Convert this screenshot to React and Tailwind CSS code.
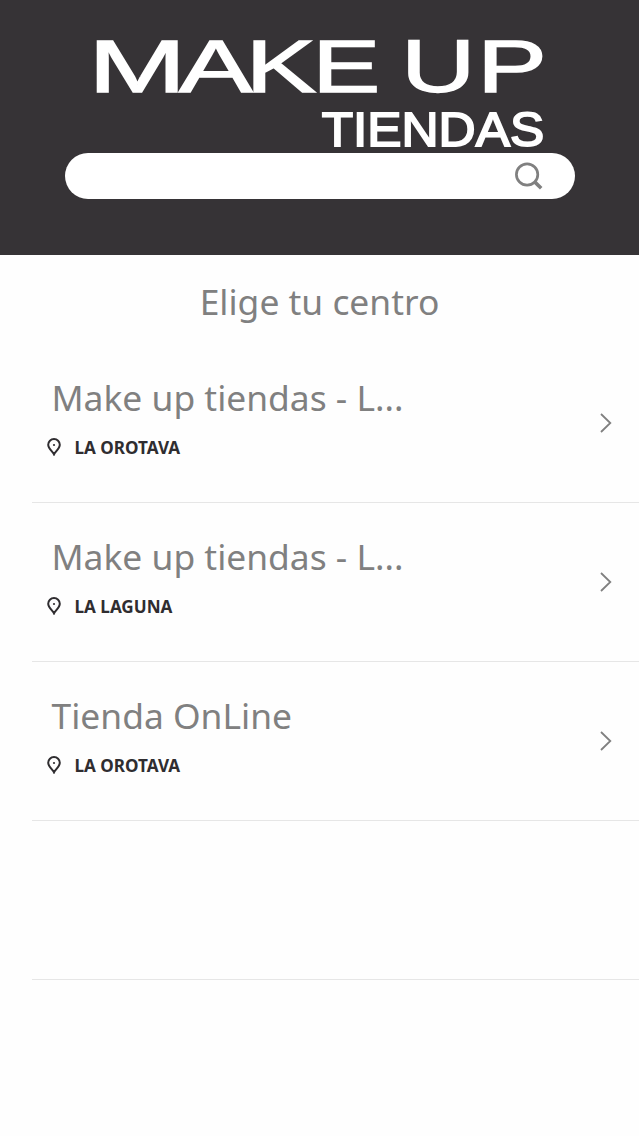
const letters = [
  { char: 'M', transform: 'translate(88.2 91.5) scale(1.6 1)' },
  { char: 'A', transform: 'translate(179 91.5) scale(1.5 1)' },
  { char: 'K', transform: 'translate(245.8 91.5) scale(1.435 1)' },
  { char: 'E', transform: 'translate(312.5 91.5) scale(1.382 1)' },
  { char: 'U', transform: 'translate(401.3 91.5) scale(1.395 1)' },
  { char: 'P', transform: 'translate(477.2 91.5) scale(1.42 1)' },
];

const stores = [
  { name: 'Make up tiendas - L...', city: 'LA OROTAVA' },
  { name: 'Make up tiendas - L...', city: 'LA LAGUNA' },
  { name: 'Tienda OnLine', city: 'LA OROTAVA' },
];

function Logo() {
  return (
    <svg
      width="639"
      height="153"
      viewBox="0 0 639 153"
      className="block shrink-0 overflow-visible font-['Liberation_Sans',sans-serif]"
      fill="#fff"
      stroke="#fff"
      aria-label="Make Up Tiendas"
    >
      {letters.map((letter) => (
        <text key={letter.char} transform={letter.transform} fontSize="73.5" strokeWidth="1.4">
          {letter.char}
        </text>
      ))}
      <text x="321.7" y="145.7" fontSize="47.5" strokeWidth="1.8" textLength="222.5" lengthAdjust="spacingAndGlyphs">
        TIENDAS
      </text>
    </svg>
  );
}

function SearchIcon() {
  return (
    <svg width="28" height="28" viewBox="0 0 28 28" fill="none" stroke="#808080">
      <circle cx="12.1" cy="12.5" r="10.7" strokeWidth="2.7" />
      <path d="M19.4 19.6l6.8 6.7" strokeWidth="3.6" />
    </svg>
  );
}

function PinIcon() {
  return (
    <svg width="14" height="18" viewBox="0 0 14 18" fill="none" stroke="#2f2d30" strokeWidth="2">
      <path d="M7 16.4C5.7 13.6 1.2 10.6 1.2 6.8a5.8 5.8 0 0 1 11.6 0C12.8 10.6 8.3 13.6 7 16.4z" />
      <circle cx="7" cy="7" r="1.1" fill="#2f2d30" stroke="none" />
    </svg>
  );
}

function ChevronIcon() {
  return (
    <svg width="12" height="20" viewBox="0 0 12 20" fill="none" stroke="#808080" strokeWidth="1.8">
      <path d="M1 1l9.3 9L1 19" />
    </svg>
  );
}

function StoreRow({ store }) {
  return (
    <li className="ml-8 h-[159px] border-b border-[#e6e6e6] flex items-start justify-between">
      <div className="pt-7">
        <h2 className="ml-[19.5px] h-[50px] text-[35.4px] leading-[50px] text-[#808080] whitespace-nowrap">{store.name}</h2>
        <p className="ml-[15px] mt-[13px] h-6 flex items-center gap-[13.5px] text-[17.1px] leading-6 font-bold text-[#2f2d30]">
          <PinIcon />
          <span className="pt-0.5">{store.city}</span>
        </p>
      </div>
      <span className="mt-[69px] mr-[27px]">
        <ChevronIcon />
      </span>
    </li>
  );
}

export default function App() {
  return (
    <div className="w-full min-h-[1136px] bg-[#fefefe] font-['Noto_Sans',sans-serif]">
      <header className="h-[254.5px] bg-[#363336] flex flex-col items-center">
        <Logo />
        <div className="w-[510px] h-[46px] rounded-full bg-white flex items-center justify-end pr-8">
          <SearchIcon />
        </div>
      </header>
      <h1 className="pt-[21.5px] h-[89.5px] text-center text-[35.4px] leading-[50px] text-[#808080]">Elige tu centro</h1>
      <ul>
        {stores.map((store, i) => (
          <StoreRow key={i} store={store} />
        ))}
        <li className="ml-8 h-[159px] border-b border-[#e6e6e6]" />
      </ul>
    </div>
  );
}
